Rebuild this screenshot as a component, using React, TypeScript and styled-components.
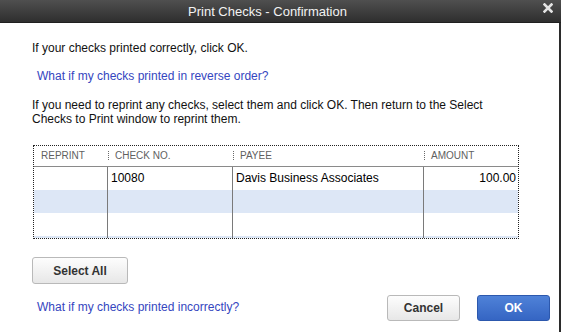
import React from "react";
import styled, { createGlobalStyle } from "styled-components";

const Global = createGlobalStyle`
  html, body { margin: 0; padding: 0; background: #ffffff; }
  body { font-family: "Liberation Sans", Arial, sans-serif; }
  * { box-sizing: border-box; }
`;

const Window = styled.div`
  width: 561px;
  height: 332px;
  display: flex;
  flex-direction: column;
  overflow: hidden;
  background: #ffffff;
`;

const TitleBar = styled.div`
  height: 23px;
  flex: none;
  display: flex;
  align-items: flex-start;
  background: linear-gradient(#4f4f4f, #2e2e2e);
  border-bottom: 1px solid #1f1f1f;
`;

const Title = styled.div`
  flex: 1;
  text-align: center;
  color: #f2f2f2;
  font-size: 13px;
  line-height: 16px;
  padding-top: 4px;
`;

const CloseBox = styled.div`
  width: 26px;
  display: flex;
  padding: 3px 0 0 8px;
`;

const Body = styled.div`
  flex: 1;
  display: flex;
  flex-direction: column;
  padding: 0 9px 0 32px;
  border-right: 2px solid #2b2b2b;
  font-size: 12px;
  line-height: 14px;
  color: #111;
`;

const Para = styled.p<{ $top: number }>`
  margin: ${(p) => p.$top}px 0 0 0;
`;

const Link = styled.a<{ $top: number }>`
  display: block;
  margin: ${(p) => p.$top}px 0 0 5px;
  color: #3546c0;
  text-decoration: none;
  cursor: pointer;
`;

const Table = styled.div`
  margin: 19px 0 0 1px;
  width: 486px;
  height: 94px;
  border: 1px dotted #222;
  display: flex;
  flex-direction: column;
  overflow: hidden;
`;

const HeaderRow = styled.div`
  height: 21px;
  flex: none;
  display: grid;
  grid-template-columns: 74px 125px 191px 1fr;
  border-bottom: 1px solid #8a8a8a;
`;

const HeaderCell = styled.div<{ $sep?: boolean }>`
  position: relative;
  padding-left: 7px;
  font-size: 10px;
  line-height: 20px;
  color: #5f5f5f;
  &::before {
    content: "";
    display: ${(p) => (p.$sep ? "block" : "none")};
    position: absolute;
    left: 0;
    top: 5px;
    width: 1px;
    height: 9px;
    background: repeating-linear-gradient(#6a6a6a 0 1px, transparent 1px 2px);
  }
`;

const Rows = styled.div`
  flex: 1;
  overflow: hidden;
`;

const Row = styled.div<{ $alt: boolean }>`
  height: 23px;
  display: grid;
  grid-template-columns: 74px 125px 191px 1fr;
  background: ${(p) => (p.$alt ? "#dde7f6" : "#ffffff")};
`;

const Cell = styled.div<{ $right?: boolean; $last?: boolean }>`
  border-right: ${(p) => (p.$last ? "none" : "1px solid #7a7a7a")};
  padding: 0 ${(p) => (p.$right ? "2px" : "3px")};
  text-align: ${(p) => (p.$right ? "right" : "left")};
  font-size: 12px;
  line-height: 23px;
  color: #000;
  white-space: nowrap;
`;

const Button = styled.button<{ $primary?: boolean; $w: number; $h: number }>`
  width: ${(p) => p.$w}px;
  height: ${(p) => p.$h}px;
  padding: 0;
  border-radius: 3px;
  font-family: "Liberation Sans", Arial, sans-serif;
  font-size: 12px;
  font-weight: bold;
  cursor: pointer;
  color: ${(p) => (p.$primary ? "#ffffff" : "#333333")};
  border: 1px solid ${(p) => (p.$primary ? "#2c58ad" : "#b9b9b9")};
  background: ${(p) =>
    p.$primary
      ? "linear-gradient(#4f82d8, #3565c3)"
      : "linear-gradient(#fdfdfd, #e7e7e7)"};
`;

const SelectRow = styled.div`
  margin-top: 18px;
  display: flex;
`;

const Footer = styled.div`
  margin-top: 11px;
  display: flex;
  align-items: center;
  gap: 17px;
`;

const FooterLink = styled(Link)`
  margin: 0 auto 0 5px;
  padding-bottom: 3px;
`;

const rows = [
  { no: "10080", payee: "Davis Business Associates", amount: "100.00" },
  { no: "", payee: "", amount: "" },
  { no: "", payee: "", amount: "" },
  { no: "", payee: "", amount: "" },
];

export default function App() {
  return (
    <>
      <Global />
      <Window>
        <TitleBar>
          <Title>Print Checks - Confirmation</Title>
          <CloseBox>
            <svg width="10" height="10" viewBox="0 0 10 10">
              <path d="M1.5 1.5 L8.5 8.5 M8.5 1.5 L1.5 8.5" stroke="#e4e4e4" strokeWidth="2.6" strokeLinecap="square" />
            </svg>
          </CloseBox>
        </TitleBar>
        <Body>
          <Para $top={18}>If your checks printed correctly, click OK.</Para>
          <Link $top={14}>What if my checks printed in reverse order?</Link>
          <Para $top={15}>
            If you need to reprint any checks, select them and click OK. Then return to the Select
            <br />
            Checks to Print window to reprint them.
          </Para>
          <Table>
            <HeaderRow>
              <HeaderCell>REPRINT</HeaderCell>
              <HeaderCell $sep>CHECK NO.</HeaderCell>
              <HeaderCell $sep>PAYEE</HeaderCell>
              <HeaderCell $sep>AMOUNT</HeaderCell>
            </HeaderRow>
            <Rows>
              {rows.map((r, i) => (
                <Row key={i} $alt={i % 2 === 1}>
                  <Cell></Cell>
                  <Cell>{r.no}</Cell>
                  <Cell>{r.payee}</Cell>
                  <Cell $right $last>{r.amount}</Cell>
                </Row>
              ))}
            </Rows>
          </Table>
          <SelectRow>
            <Button $w={96} $h={27}>Select All</Button>
          </SelectRow>
          <Footer>
            <FooterLink $top={0}>What if my checks printed incorrectly?</FooterLink>
            <Button $w={73} $h={26}>Cancel</Button>
            <Button $w={73} $h={26} $primary>OK</Button>
          </Footer>
        </Body>
      </Window>
    </>
  );
}
